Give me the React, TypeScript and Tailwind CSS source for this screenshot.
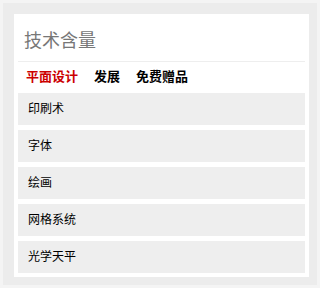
const tabs = ['平面设计', '发展', '免费赠品'];
const items = ['印刷术', '字体', '绘画', '网格系统', '光学天平'];

export default function App() {
  return (
    <div className="w-[320px] h-[288px] bg-[#ececec] border-[3px] border-[#f4f4f4] pl-[11px] pr-[8px] pt-[11px] font-['Liberation_Sans','Noto_Sans_CJK_SC',sans-serif]">
      <div className="bg-white px-[4px] pb-[4px]">
        <h2 className="pl-[6px] pt-[15px] pb-[8px] text-[18px] leading-[24px] text-[#777] font-normal">技术含量</h2>
        <div className="h-px bg-[#eeeeee]" />
        <div className="flex gap-[16px] pl-[8px] pt-[8px] pb-[10px] text-[13px] leading-[13px] font-bold text-black">
          {tabs.map((t, i) => (
            <span key={t} className={i === 0 ? 'text-[#cc0000]' : ''}>{t}</span>
          ))}
        </div>
        <ul className="flex flex-col gap-[5px]">
          {items.map((item) => (
            <li key={item} className="h-[32px] leading-[32px] bg-[#eeeeee] pl-[10px] text-[12px] text-black">
              {item}
            </li>
          ))}
        </ul>
      </div>
    </div>
  );
}
